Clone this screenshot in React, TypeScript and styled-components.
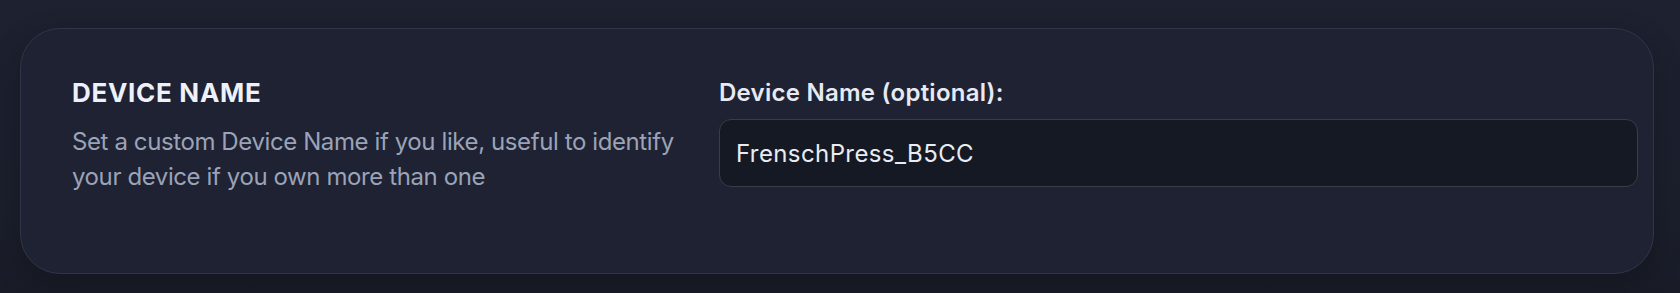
import React from "react";
import styled, { createGlobalStyle } from "styled-components";

const GlobalStyle = createGlobalStyle`
  html, body {
    margin: 0;
    padding: 0;
    background: #1b1f2c;
  }
  body {
    font-family: Inter, "Noto Sans", "Liberation Sans", sans-serif;
    -webkit-font-smoothing: antialiased;
  }
  * { box-sizing: border-box; }
`;

const Page = styled.main`
  width: 1680px;
  height: 293px;
  padding: 28px 26px 18px 20px;
  background: linear-gradient(180deg, #1d2130 0%, #1b1f2c 70%, #191c27 100%);
`;

const Card = styled.section`
  display: grid;
  grid-template-columns: 615px 1fr;
  column-gap: 32px;
  align-items: start;
  padding: 48px 15px 79px 51px;
  background: #1e2232;
  border: 1px solid #30354a;
  border-radius: 40px;
  box-shadow: 0 10px 30px rgba(0, 0, 0, 0.22);
`;

const InfoColumn = styled.div`
  display: flex;
  flex-direction: column;
  gap: 15px;
`;

const Heading = styled.h2`
  margin: 0;
  font-size: 26px;
  line-height: 32px;
  font-weight: 700;
  letter-spacing: 0.7px;
  text-transform: uppercase;
  color: #eef1f9;
`;

const Description = styled.p`
  margin: 0;
  font-size: 24px;
  line-height: 35px;
  font-weight: 400;
  letter-spacing: -0.4px;
  color: #9ba3b8;
`;

const FieldColumn = styled.div`
  display: flex;
  flex-direction: column;
  gap: 10px;
`;

const Label = styled.label`
  font-size: 24px;
  line-height: 32px;
  font-weight: 600;
  letter-spacing: 0.25px;
  color: #e7eaf3;
`;

const TextInput = styled.input`
  width: 100%;
  height: 68px;
  padding: 0 16px;
  background: #151923;
  border: 1.5px solid #383d4a;
  border-radius: 12px;
  font-family: inherit;
  font-size: 24px;
  font-weight: 400;
  letter-spacing: 0.4px;
  color: #e9ecf3;
  outline: none;
`;

export default function App() {
  return (
    <>
      <GlobalStyle />
      <Page>
        <Card>
          <InfoColumn>
            <Heading>Device Name</Heading>
            <Description>
              Set a custom Device Name if you like, useful to identify your device if you own more than one
            </Description>
          </InfoColumn>
          <FieldColumn>
            <Label htmlFor="device-name">Device Name (optional):</Label>
            <TextInput id="device-name" type="text" defaultValue="FrenschPress_B5CC" />
          </FieldColumn>
        </Card>
      </Page>
    </>
  );
}
